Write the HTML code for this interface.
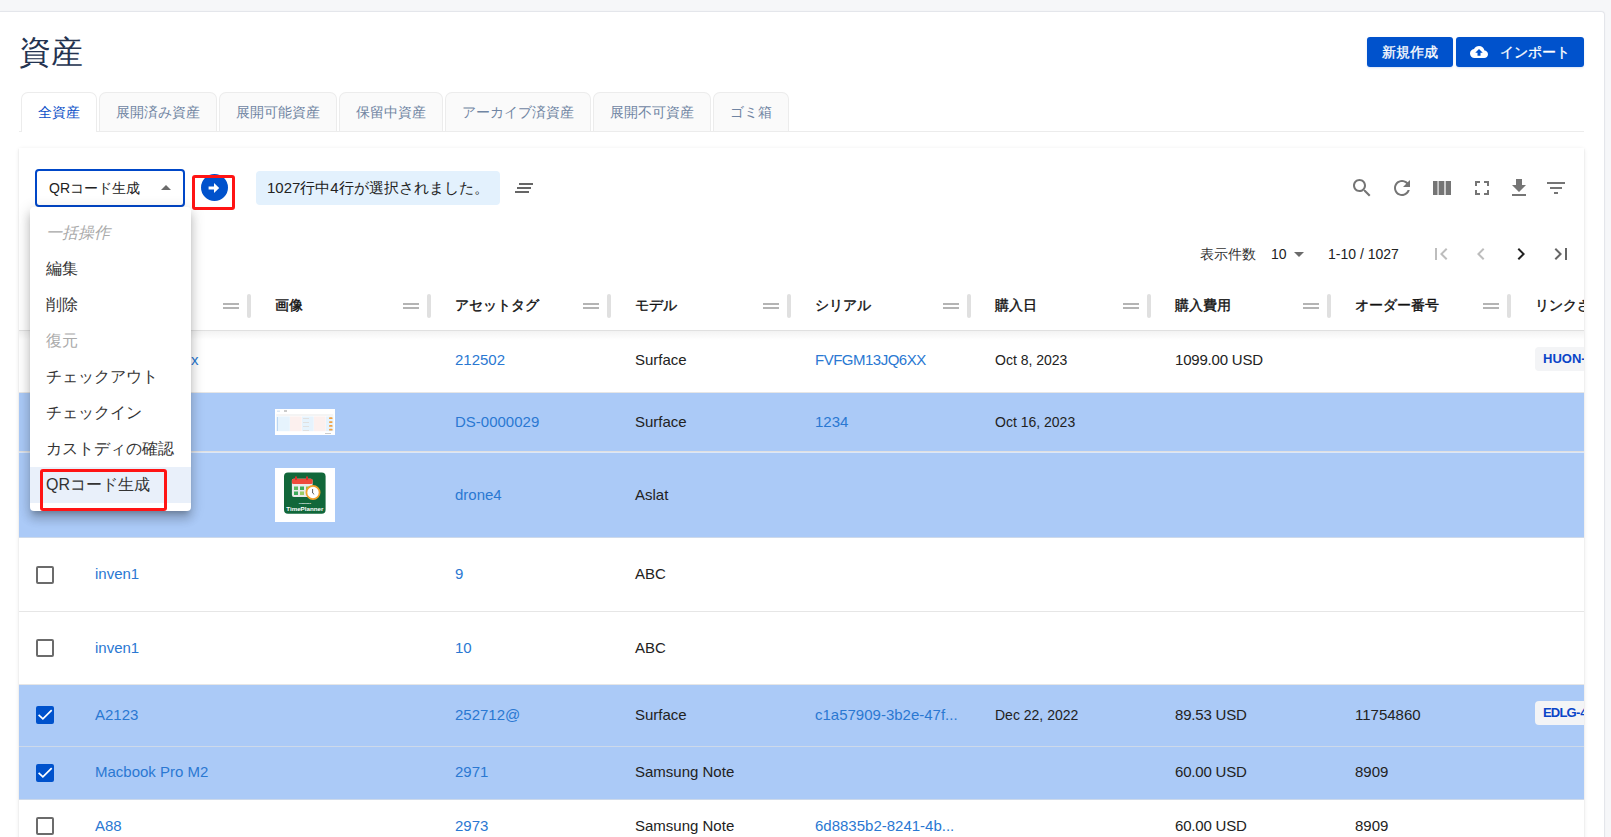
<!DOCTYPE html>
<html><head><meta charset="utf-8"><style>
*{box-sizing:border-box;margin:0;padding:0}
html,body{width:1611px;height:837px;overflow:hidden}
body{background:#f6f7f9;font-family:"Liberation Sans",sans-serif;color:#222;position:relative}
.abs{position:absolute}
.t{position:absolute;white-space:nowrap}
.page{position:absolute;left:0;top:11px;width:1605px;height:840px;background:#fff;border-top:1px solid #e4e6eb;border-right:1px solid #e4e6eb;border-top-right-radius:4px;box-shadow:0 0 2px rgba(0,0,0,.04)}
.title{position:absolute;left:19px;top:33px;font-size:32px;line-height:38px;color:#243350;white-space:nowrap}
.btn{position:absolute;top:37px;height:30px;background:#0052cc;border-radius:3px;color:#fff;font-size:14px;line-height:30px;white-space:nowrap;-webkit-text-stroke:0.3px #fff;box-shadow:0 1px 2px rgba(0,82,204,.15)}
.tab{position:absolute;top:92px;height:39px;border:1px solid #ececec;border-bottom:none;border-radius:7px 7px 0 0;background:#fafafa;color:#7085a3;font-size:14px;line-height:38px;text-align:center;white-space:nowrap;z-index:2}
.tab.active{background:#fff;color:#0a50c8;height:40px}
.tabline{position:absolute;left:19px;top:131px;width:1565px;height:1px;background:#ececec;z-index:1}
.card{position:absolute;left:19px;top:148px;width:1565px;height:720px;background:#fff;box-shadow:0 1px 1px rgba(0,0,0,.12),0 1px 4px rgba(0,0,0,.1)}
.row{position:absolute;left:19px;width:1565px;border-bottom:1px solid #e6e6e6}
.sel{background:#abcaf7;border-bottom-color:#cdd9ea}
.cell{position:absolute;white-space:nowrap;font-size:15px;line-height:20px}
.lnk{color:#2a78d2}
.hd{position:absolute;top:295px;font-size:14px;-webkit-text-stroke:0.4px #111;color:#111;line-height:20px;white-space:nowrap}
.handle{position:absolute;top:303px;width:16px;height:6px;border-top:2px solid #b4b4b4;border-bottom:2px solid #b4b4b4}
.sep{position:absolute;top:294px;width:4px;height:24px;border-radius:2px;background:#e0e0e0}
.cb{position:absolute;left:36px;width:18px;height:18px;border:2px solid #6b6b6b;border-radius:2px;background:#fff}
.cb.on{background:#0052cc;border-color:#0052cc}
.chip{position:absolute;left:1535px;height:24px;border-radius:4px;background:#f3f4f6;color:#0a45c8;font-weight:bold;font-size:13px;line-height:24px;padding-left:8px;width:110px;white-space:nowrap}
.menu{position:absolute;left:30px;top:207px;width:161px;height:304px;background:#fff;border-radius:4px;box-shadow:0 5px 5px -3px rgba(0,0,0,.2),0 8px 10px 1px rgba(0,0,0,.14),0 3px 14px 2px rgba(0,0,0,.12);z-index:10}
.mi{position:absolute;left:16px;font-size:16px;line-height:20px;color:#333;white-space:nowrap}
</style></head><body>
<div class="page"></div>
<div class="title">資産</div>
<div class="btn" style="left:1367px;width:86px;text-align:center">新規作成</div>
<div class="btn" style="left:1456px;width:128px"><svg class="abs" style="left:14px;top:6px" width="18" height="18" viewBox="0 0 24 24"><path fill="#fff" d="M19.35 10.04C18.67 6.59 15.64 4 12 4 9.11 4 6.6 5.64 5.35 8.04 2.34 8.36 0 10.91 0 14c0 3.31 2.69 6 6 6h13c2.76 0 5-2.24 5-5 0-2.64-2.05-4.780-4.65-4.96zM14 13v4h-4v-4H7l5-5 5 5h-3z"/></svg><span class="abs" style="left:44px;top:0">インポート</span></div>
<div class="tab active" style="left:21px;width:76px">全資産</div>
<div class="tab" style="left:99px;width:118px">展開済み資産</div>
<div class="tab" style="left:219px;width:118px">展開可能資産</div>
<div class="tab" style="left:339px;width:104px">保留中資産</div>
<div class="tab" style="left:445px;width:146px">アーカイブ済資産</div>
<div class="tab" style="left:593px;width:118px">展開不可資産</div>
<div class="tab" style="left:713px;width:76px">ゴミ箱</div>
<div class="tabline"></div>
<div class="card"></div>
<div class="abs" style="left:35px;top:169px;width:150px;height:38px;border:2px solid #0047c8;border-radius:4px;background:#fff"></div>
<div class="t" style="left:49px;top:178px;font-size:14px;line-height:20px;color:#222">QRコード生成</div>
<svg class="abs" style="left:161px;top:185px" width="10" height="5" viewBox="0 0 10 5"><path fill="#6b6b6b" d="M0 5L5 0 10 5z"/></svg>
<div class="abs" style="left:200.5px;top:174px;width:27px;height:27px;border-radius:50%;background:#0052cc"></div>
<svg class="abs" style="left:208px;top:182px" width="12" height="12" viewBox="0 0 12 12"><path fill="#fff" d="M0.6 4.6h5.4V1l5.2 5-5.2 5V7.4H0.6z"/></svg>
<div class="abs" style="left:192px;top:175px;width:43px;height:35px;border:3px solid #ff1414;border-radius:3px"></div>
<div class="abs" style="left:256px;top:171px;width:244px;height:34px;border-radius:4px;background:#e3f1fd"></div>
<div class="t" style="left:267px;top:178px;font-size:15px;line-height:20px;color:#222">1027行中4行が選択されました。</div>
<div class="abs" style="left:519px;top:183px;width:14px;height:2px;background:#666"></div>
<div class="abs" style="left:517px;top:187px;width:14px;height:2px;background:#666"></div>
<div class="abs" style="left:515px;top:191px;width:14px;height:2px;background:#666"></div>
<svg class="abs" style="left:1350px;top:176px" width="24" height="24" viewBox="0 0 24 24"><path fill="#757575" d="M15.5 14h-.79l-.28-.27C15.41 12.59 16 11.11 16 9.5 16 5.91 13.09 3 9.5 3S3 5.91 3 9.5 5.91 16 9.5 16c1.61 0 3.09-.59 4.230-1.57l.27.28v.79l5 4.99L20.49 19l-4.99-5zm-6 0C7.01 14 5 11.99 5 9.5S7.01 5 9.5 5 14 7.01 14 9.5 11.99 14 9.5 14z"/></svg>
<svg class="abs" style="left:1390px;top:176px" width="24" height="24" viewBox="0 0 24 24"><path fill="#757575" d="M17.65 6.35C16.2 4.9 14.21 4 12 4c-4.42 0-7.99 3.58-7.99 8s3.57 8 7.99 8c3.73 0 6.84-2.55 7.730-6h-2.08c-.82 2.33-3.04 4-5.65 4-3.31 0-6-2.69-6-6s2.69-6 6-6c1.66 0 3.14.69 4.22 1.78L13 11h7V4l-2.35 2.35z"/></svg>
<svg class="abs" style="left:1470px;top:176px" width="24" height="24" viewBox="0 0 24 24"><path fill="#757575" d="M7 14H5v5h5v-2H7v-3zm-2-4h2V7h3V5H5v5zm12 7h-3v2h5v-5h-2v3zM14 5v2h3v3h2V5h-5z"/></svg>
<svg class="abs" style="left:1507px;top:176px" width="24" height="24" viewBox="0 0 24 24"><path fill="#757575" d="M19 9h-4V3H9v6H5l7 7 7-7zM5 18v2h14v-2H5z"/></svg>
<svg class="abs" style="left:1544px;top:176px" width="24" height="24" viewBox="0 0 24 24"><path fill="#757575" d="M10 18h4v-2h-4v2zM3 6v2h18V6H3zm3 7h12v-2H6v2z"/></svg>
<svg class="abs" style="left:1433px;top:181px" width="18" height="14" viewBox="0 0 18 14"><path fill="#757575" d="M0 0h4.6v14H0zM6 0h5.3v14H6zM12.7 0H18v14h-5.3z"/><path fill="#c9c9c9" d="M4.6 0H6v14H4.6zM11.3 0h1.4v14h-1.4z"/></svg>
<div class="t" style="left:1200px;top:244px;font-size:14px;line-height:20px;color:#333">表示件数</div>
<div class="t" style="left:1271px;top:244px;font-size:14px;line-height:20px;color:#222">10</div>
<svg class="abs" style="left:1294px;top:252px" width="10" height="5" viewBox="0 0 10 5"><path fill="#6b6b6b" d="M0 0L5 5 10 0z"/></svg>
<div class="t" style="left:1328px;top:244px;font-size:14px;line-height:20px;color:#222">1-10 / 1027</div>
<svg class="abs" style="left:1429px;top:242px" width="24" height="24" viewBox="0 0 24 24"><path fill="#bdbdbd" d="M18.41 16.59L13.82 12l4.59-4.59L17 6l-6 6 6 6zM6 6h2v12H6z"/></svg>
<svg class="abs" style="left:1469px;top:242px" width="24" height="24" viewBox="0 0 24 24"><path fill="#bdbdbd" d="M15.41 7.41L14 6l-6 6 6 6 1.41-1.41L10.830 12z"/></svg>
<svg class="abs" style="left:1509px;top:242px" width="24" height="24" viewBox="0 0 24 24"><path fill="#222" d="M10 6L8.59 7.41 13.17 12l-4.58 4.59L10 18l6-6z"/></svg>
<svg class="abs" style="left:1549px;top:242px" width="24" height="24" viewBox="0 0 24 24"><path fill="#666" d="M5.59 7.41L10.18 12l-4.59 4.59L7 18l6-6-6-6zM16 6h2v12h-2z"/></svg>
<div class="abs" style="left:0;top:0;width:1584px;height:837px;overflow:hidden">
<div class="abs" style="left:19px;top:330px;width:1565px;height:1px;background:#e0e0e0"></div>
<div class="handle" style="left:223px"></div>
<div class="sep" style="left:247px"></div>
<div class="hd" style="left:275px">画像</div>
<div class="handle" style="left:403px"></div>
<div class="sep" style="left:427px"></div>
<div class="hd" style="left:455px">アセットタグ</div>
<div class="handle" style="left:583px"></div>
<div class="sep" style="left:607px"></div>
<div class="hd" style="left:635px">モデル</div>
<div class="handle" style="left:763px"></div>
<div class="sep" style="left:787px"></div>
<div class="hd" style="left:815px">シリアル</div>
<div class="handle" style="left:943px"></div>
<div class="sep" style="left:967px"></div>
<div class="hd" style="left:995px">購入日</div>
<div class="handle" style="left:1123px"></div>
<div class="sep" style="left:1147px"></div>
<div class="hd" style="left:1175px">購入費用</div>
<div class="handle" style="left:1303px"></div>
<div class="sep" style="left:1327px"></div>
<div class="hd" style="left:1355px">オーダー番号</div>
<div class="handle" style="left:1483px"></div>
<div class="sep" style="left:1507px"></div>
<div class="hd" style="left:1535px">リンクさ</div>
<div class="row" style="top:331px;height:62px"></div>
<div class="cell lnk" style="left:455px;top:350px">212502</div>
<div class="cell" style="left:635px;top:350px">Surface</div>
<div class="cell lnk" style="left:815px;top:350px;letter-spacing:-0.5px">FVFGM13JQ6XX</div>
<div class="cell" style="left:995px;top:350px;font-size:14px">Oct 8, 2023</div>
<div class="cell" style="left:1175px;top:350px;letter-spacing:-0.2px">1099.00 USD</div>
<div class="chip" style="top:347px">HUON-0012</div>
<div class="row sel" style="top:393px;height:60px"></div>
<div class="cell lnk" style="left:455px;top:412px">DS-0000029</div>
<div class="cell" style="left:635px;top:412px">Surface</div>
<div class="cell lnk" style="left:815px;top:412px;letter-spacing:0">1234</div>
<div class="cell" style="left:995px;top:412px;font-size:14px">Oct 16, 2023</div>
<div class="row sel" style="top:453px;height:85px"></div>
<div class="cell lnk" style="left:455px;top:485px">drone4</div>
<div class="cell" style="left:635px;top:485px">Aslat</div>
<div class="row" style="top:538px;height:74px"></div>
<div class="cb" style="top:566px"></div>
<div class="cell lnk" style="left:95px;top:564px">inven1</div>
<div class="cell lnk" style="left:455px;top:564px">9</div>
<div class="cell" style="left:635px;top:564px">ABC</div>
<div class="row" style="top:612px;height:73px"></div>
<div class="cb" style="top:639px"></div>
<div class="cell lnk" style="left:95px;top:638px">inven1</div>
<div class="cell lnk" style="left:455px;top:638px">10</div>
<div class="cell" style="left:635px;top:638px">ABC</div>
<div class="row sel" style="top:685px;height:62px"></div>
<div class="cb on" style="top:706px"><svg class="abs" style="left:-2px;top:-2px" width="18" height="18" viewBox="0 0 18 18"><path d="M2.6 8.8L6.9 12.9l8.8-8.8" stroke="#fff" stroke-width="1.7" fill="none"/></svg></div>
<div class="cell lnk" style="left:95px;top:705px">A2123</div>
<div class="cell lnk" style="left:455px;top:705px">252712@</div>
<div class="cell" style="left:635px;top:705px">Surface</div>
<div class="cell lnk" style="left:815px;top:705px;letter-spacing:0">c1a57909-3b2e-47f...</div>
<div class="cell" style="left:995px;top:705px;font-size:14px">Dec 22, 2022</div>
<div class="cell" style="left:1175px;top:705px;letter-spacing:-0.2px">89.53 USD</div>
<div class="cell" style="left:1355px;top:705px">11754860</div>
<div class="chip" style="top:701px"><span style="letter-spacing:-0.8px">EDLG</span>-4021</div>
<div class="row sel" style="top:747px;height:53px"></div>
<div class="cb on" style="top:764px"><svg class="abs" style="left:-2px;top:-2px" width="18" height="18" viewBox="0 0 18 18"><path d="M2.6 8.8L6.9 12.9l8.8-8.8" stroke="#fff" stroke-width="1.7" fill="none"/></svg></div>
<div class="cell lnk" style="left:95px;top:762px">Macbook Pro M2</div>
<div class="cell lnk" style="left:455px;top:762px">2971</div>
<div class="cell" style="left:635px;top:762px">Samsung Note</div>
<div class="cell" style="left:1175px;top:762px;letter-spacing:-0.2px">60.00 USD</div>
<div class="cell" style="left:1355px;top:762px">8909</div>
<div class="row" style="top:800px;height:53px"></div>
<div class="cb" style="top:817px"></div>
<div class="cell lnk" style="left:95px;top:816px">A88</div>
<div class="cell lnk" style="left:455px;top:816px">2973</div>
<div class="cell" style="left:635px;top:816px">Samsung Note</div>
<div class="cell lnk" style="left:815px;top:816px;letter-spacing:0">6d8835b2-8241-4b...</div>
<div class="cell" style="left:1175px;top:816px;letter-spacing:-0.2px">60.00 USD</div>
<div class="cell" style="left:1355px;top:816px">8909</div>
<div class="cell lnk" style="left:191px;top:350px">x</div>
<div class="abs" style="left:19px;top:331px;width:1565px;height:9px;background:linear-gradient(rgba(0,0,0,.05),rgba(0,0,0,0));z-index:3"></div>
<div class="abs" style="left:19px;top:451px;width:1565px;height:1px;background:#e0e0e0;z-index:3"></div>
<div class="abs" style="left:19px;top:452px;width:1565px;height:1px;background:#dce7f8;z-index:3"></div>
</div>
<svg class="abs" style="left:275px;top:409px" width="60" height="26" viewBox="0 0 60 26"><rect width="60" height="26" fill="#fff"/>
<rect x="2" y="1.5" width="3" height="1.5" fill="#dce8f5"/><rect x="9" y="1.5" width="3" height="1" fill="#999"/>
<rect x="1.3" y="5" width="57" height="2" fill="#f4f4f4"/>
<rect x="1.3" y="7.4" width="13.5" height="14.8" fill="#e6f3fd"/><rect x="15" y="7.4" width="11.7" height="14.8" fill="#fcf0ee"/>
<rect x="27" y="7.4" width="11.7" height="14.8" fill="#e6f3fd"/><rect x="39" y="7.4" width="11.7" height="14.8" fill="#fcf0ee"/>
<rect x="51" y="7.4" width="7.5" height="14.8" fill="#e6f3fd"/>
<rect x="54" y="8.3" width="3.6" height="1.8" rx=".9" fill="#f0a040"/><rect x="54" y="12.2" width="3.6" height="1.8" rx=".9" fill="#f0a040"/>
<rect x="54" y="16" width="3.6" height="1.8" rx=".9" fill="#f0a040"/><rect x="54" y="19.8" width="3.6" height="1.8" rx=".9" fill="#f0a040"/>
<rect x="2" y="8" width="1" height="14" fill="#bcd6f2"/><rect x="28" y="9" width="6" height="1" fill="#e0e0e0"/><rect x="28" y="13" width="6" height="1" fill="#e0e0e0"/><rect x="28" y="17" width="6" height="1" fill="#e0e0e0"/><rect x="28" y="21" width="6" height="1" fill="#e0e0e0"/>
<rect x="50" y="24" width="6" height="1" fill="#ccc"/></svg>
<svg class="abs" style="left:275px;top:468px" width="60" height="54" viewBox="0 0 60 54"><rect width="60" height="54" fill="#fff"/>
<rect x="9" y="4.5" width="41.6" height="41.3" rx="4" fill="#11673a"/>
<rect x="16.9" y="10.8" width="20.7" height="18.2" rx="2" fill="#eaeaea"/>
<rect x="16.9" y="10.8" width="20.7" height="5.2" rx="1.5" fill="#ef4a3a"/>
<rect x="20" y="8.2" width="2" height="4" rx="1" fill="#d8302a"/><rect x="31" y="8.2" width="2" height="4" rx="1" fill="#d8302a"/>
<rect x="19" y="18.5" width="4" height="3.5" fill="#5cb85c"/><rect x="25" y="18.5" width="4" height="3.5" fill="#3caa5a"/><rect x="31" y="18.5" width="4" height="3.5" fill="#8bc34a"/>
<rect x="19" y="23.5" width="4" height="3.5" fill="#3caa5a"/><rect x="25" y="23.5" width="4" height="3.5" fill="#9ccc65"/>
<circle cx="38" cy="24.5" r="6.6" fill="#fff" stroke="#f2a22a" stroke-width="1.8"/>
<path d="M37.6 21v4l1.6 1.3" stroke="#333" stroke-width=".8" fill="none"/>
<text x="29.8" y="36.3" font-family="Liberation Sans" font-size="2.3" font-weight="bold" fill="#fff" text-anchor="middle">Teamboard</text>
<text x="29.8" y="43.2" font-family="Liberation Sans" font-size="6.2" font-weight="bold" fill="#fff" text-anchor="middle">TimePlanner</text>
</svg>
<div class="menu">
<div class="abs" style="left:0;top:260px;width:161px;height:36px;background:#e9f0fa"></div>
<div class="mi" style="top:16px;color:#aaa;font-style:italic;">一括操作</div>
<div class="mi" style="top:52px;">編集</div>
<div class="mi" style="top:88px;">削除</div>
<div class="mi" style="top:124px;color:#aaa;">復元</div>
<div class="mi" style="top:160px;">チェックアウト</div>
<div class="mi" style="top:196px;">チェックイン</div>
<div class="mi" style="top:232px;">カストディの確認</div>
<div class="mi" style="top:268px;">QRコード生成</div>
<div class="abs" style="left:10px;top:262px;width:127px;height:42px;border:3px solid #ff1414;border-radius:3px"></div>
</div>
</body></html>
